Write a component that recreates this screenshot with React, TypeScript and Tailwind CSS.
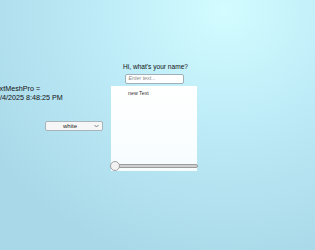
export default function App() {
  return (
    <main
      className="relative w-[315px] h-[250px] overflow-hidden bg-[radial-gradient(ellipse_280px_260px_at_225px_10px,#d2fcff_0%,#bdebf7_45%,#a9d8e8_100%)]"
      style={{ fontFamily: '"Liberation Sans", Arial, sans-serif' }}
    >
      {/* debug readout, runs off the left edge of the game view */}
      <div className="absolute left-[-8px] top-[84px] text-[7.2px] leading-[9px] text-[#111] whitespace-nowrap">
        <div>TextMeshPro =</div>
        <div>12/4/2025 8:48:25 PM</div>
      </div>

      {/* colour dropdown */}
      <div className="absolute left-[45px] top-[121px] w-[58px] h-[10px] flex items-center rounded-[2px] border border-[#a8b4ba] bg-[#f6f6f6]">
        <span className="flex-1 text-center text-[6px] leading-none text-[#222]">white</span>
        <svg className="w-[5px] h-[4px] mr-[3px]" viewBox="0 0 10 6" fill="none" stroke="#555" strokeWidth={1.4}>
          <path d="M1 1l4 4 4-4" />
        </svg>
      </div>

      {/* name prompt + panel */}
      <div className="absolute left-[110px] top-[62px] w-[88px] flex flex-col items-center">
        <div className="ml-[3px] text-[6.6px] leading-[9px] text-[#111] whitespace-nowrap">Hi, what's your name?</div>
        <div className="mt-[3px] w-[59px] h-[10px] flex items-center rounded-[2px] border border-[#9fb0b8] bg-white px-[3px]">
          <span className="text-[5.3px] italic leading-none text-[#8a8a8a]">Enter text...</span>
        </div>
        <div className="mt-[2px] w-full h-[85px] flex flex-col">
          <div className="flex-1 mx-[1px] bg-gradient-to-b from-white to-[#f6fdff] pt-[4px] pl-[17px]">
            <div className="text-[5.3px] leading-[7px] text-[#333]">new Text</div>
          </div>
          <div className="relative -mt-[10px] h-[10px] flex items-center">
            <div className="w-full h-[4px] rounded-full border border-[#9c9c9c] bg-[#cfcfcf]" />
            <div className="absolute left-0 top-0 w-[10px] h-[10px] rounded-full border border-[#a0a0a0] bg-[#f2f2f2]" />
          </div>
        </div>
      </div>
    </main>
  )
}
